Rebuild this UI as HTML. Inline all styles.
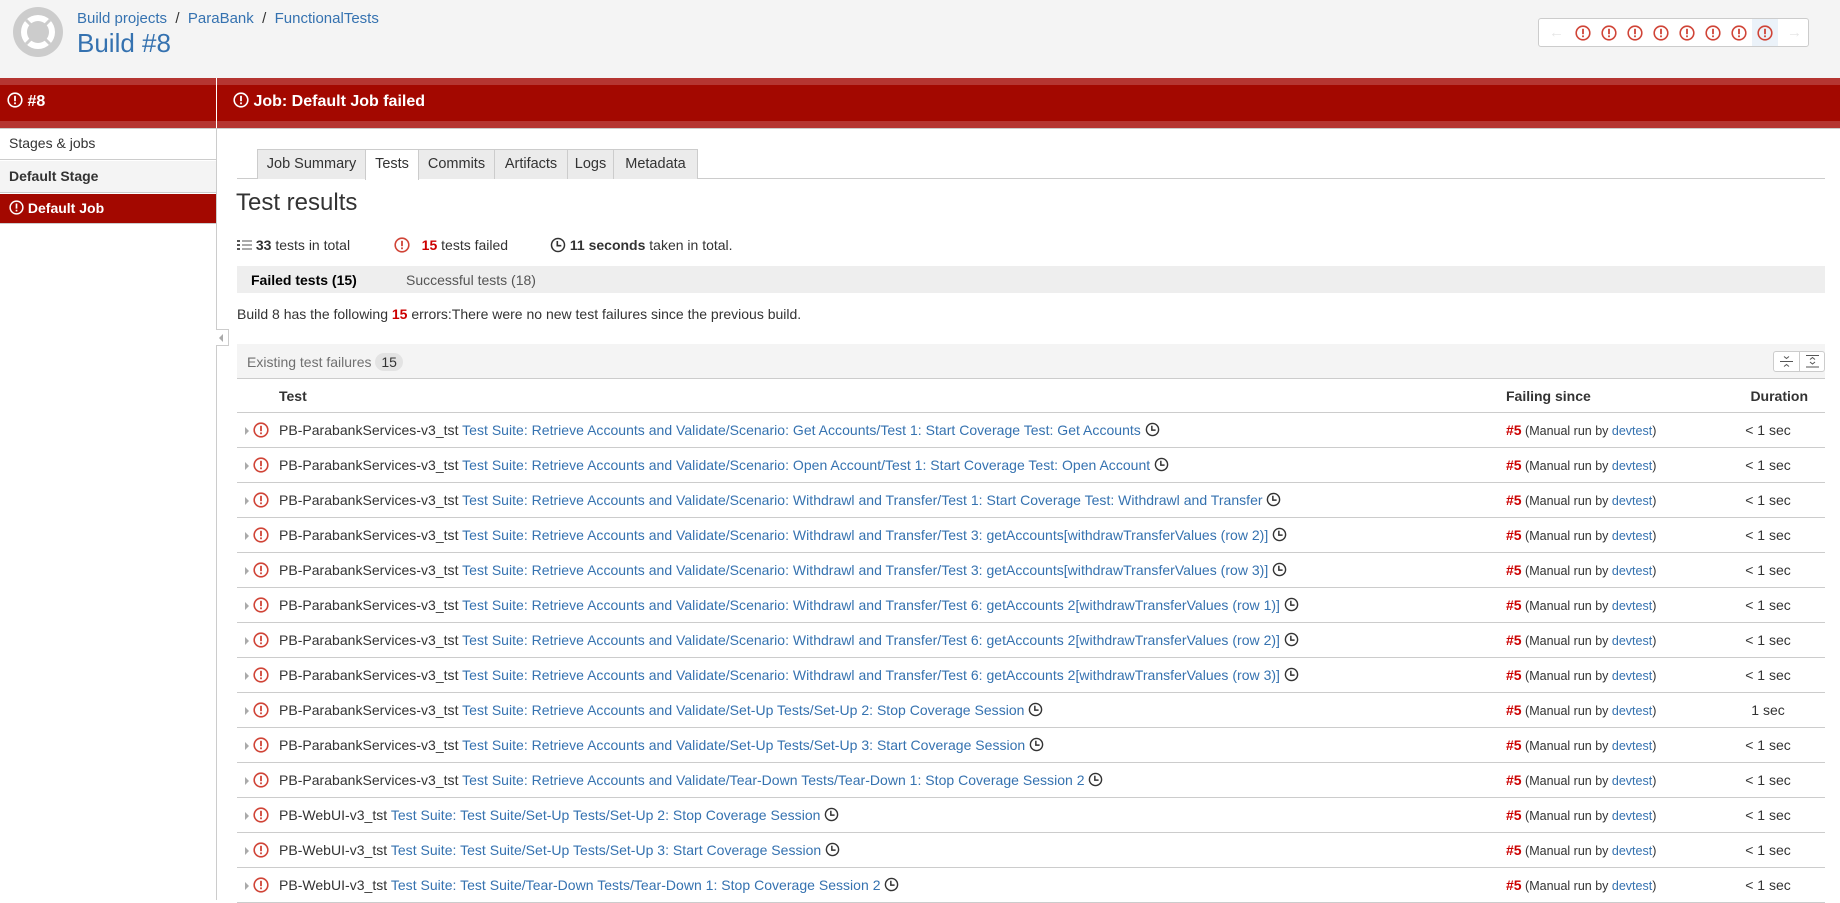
<!DOCTYPE html>
<html><head><meta charset="utf-8"><style>
*{box-sizing:border-box;margin:0;padding:0}
body{width:1840px;height:900px;overflow:hidden;background:#fff;font-family:"Liberation Sans",Arial,sans-serif;color:#333;font-size:14px;position:relative}
.a{position:absolute}
a,.lk{color:#3572b0;text-decoration:none}
.hdr{left:0;top:0;width:1840px;height:78px;background:#f4f4f4}
.band{left:0;top:78px;width:1840px;height:50px;background:#b53531}
.band .d{position:absolute;left:0;top:7px;width:1840px;height:36px;background:#a30800}
.ico{display:inline-block;vertical-align:middle}
.tab{position:absolute;top:149px;height:30px;border:1px solid #ccc;border-bottom:none;background:#ebebeb;font-size:14.5px;line-height:29px;text-align:center;color:#333}
.row{position:absolute;left:237px;width:1588px;height:35px;border-bottom:1px solid #ccc;font-size:14px;line-height:34px;white-space:nowrap}
.row .t{position:absolute;left:8px;top:14px;width:0;height:0;border-left:4px solid #aaa;border-top:4px solid transparent;border-bottom:4px solid transparent}
.row .e{position:absolute;left:16px;top:9px}
.row .n{position:absolute;left:42px;letter-spacing:0.02px}
.row .f{position:absolute;left:1269px;font-size:12.5px}
.row .f b{color:#c00;font-size:14px}
.row .du{position:absolute;right:17px;width:80px;text-align:center}
</style></head><body>
<svg width="0" height="0" style="position:absolute"><defs>
<symbol id="err" viewBox="0 0 16 16"><circle cx="8" cy="8" r="6.8" fill="none" stroke="currentColor" stroke-width="1.6"/><rect x="7.1" y="3.8" width="1.8" height="5.4" fill="currentColor"/><rect x="7.1" y="10.4" width="1.8" height="1.8" fill="currentColor"/></symbol>
<symbol id="clk" viewBox="0 0 16 16"><circle cx="8" cy="8" r="6.5" fill="none" stroke="currentColor" stroke-width="1.5"/><path d="M7.3 4v4.7h4" fill="none" stroke="currentColor" stroke-width="1.6"/></symbol>
</defs></svg>

<div class="a hdr"></div>
<svg class="a" style="left:13px;top:7px" width="50" height="50" viewBox="0 0 50 50"><circle cx="25" cy="25" r="25" fill="#ccc"/>
<g fill="#fff"><path d="M25 8a17 17 0 0 1 17 17h-6a11 11 0 0 0-11-11z"/><path d="M42 25a17 17 0 0 1-17 17v-6a11 11 0 0 0 11-11z"/><path d="M25 42A17 17 0 0 1 8 25h6a11 11 0 0 0 11 11z"/><path d="M8 25A17 17 0 0 1 25 8v6a11 11 0 0 0-11 11z"/></g>
<g stroke="#ccc" stroke-width="3"><line x1="13" y1="13" x2="20" y2="20"/><line x1="37" y1="13" x2="30" y2="20"/><line x1="13" y1="37" x2="20" y2="30"/><line x1="37" y1="37" x2="30" y2="30"/></g></svg>
<div class="a" style="left:77px;top:10px;font-size:15px"><a>Build projects</a>&nbsp; / &nbsp;<a>ParaBank</a>&nbsp; / &nbsp;<a>FunctionalTests</a></div>
<div class="a" style="left:77px;top:28px;font-size:26px;color:#3572b0">Build #8</div>

<div class="a" style="left:1538px;top:18px;width:271px;height:29px;background:#fff;border:1px solid #ccc;border-radius:3px"></div>
<div class="a" style="left:1752px;top:19px;width:26px;height:27px;background:#ebf2f9"></div>
<div class="a" style="left:1549px;top:24px;color:#e6e6e6;font-size:15px">&#8592;</div>
<div class="a" style="left:1787px;top:24px;color:#e6e6e6;font-size:15px">&#8594;</div>
<div class="a" style="left:1575px;top:25px;color:#d04437;white-space:nowrap">
<svg width="16" height="16" style="margin-right:10px"><use href="#err"/></svg><svg width="16" height="16" style="margin-right:10px"><use href="#err"/></svg><svg width="16" height="16" style="margin-right:10px"><use href="#err"/></svg><svg width="16" height="16" style="margin-right:10px"><use href="#err"/></svg><svg width="16" height="16" style="margin-right:10px"><use href="#err"/></svg><svg width="16" height="16" style="margin-right:10px"><use href="#err"/></svg><svg width="16" height="16" style="margin-right:10px"><use href="#err"/></svg><svg width="16" height="16"><use href="#err"/></svg></div>

<div class="a band"><div class="d"></div></div>
<div class="a" style="left:216px;top:78px;width:1px;height:50px;background:#fff"></div>
<div class="a" style="left:216px;top:128px;width:1px;height:772px;background:#ccc"></div>
<div class="a" style="left:0;top:128px;width:1840px;height:1px;background:#ccc"></div>
<div class="a" style="left:7px;top:93px;color:#fff;font-size:16px;font-weight:bold"><svg class="ico" width="16" height="16" style="margin-top:-3px"><use href="#err"/></svg> #8</div>
<div class="a" style="left:233px;top:93px;color:#fff;font-size:16px;font-weight:bold"><svg class="ico" width="16" height="16" style="margin-top:-3px"><use href="#err"/></svg> Job: Default Job failed</div>

<div class="a" style="left:0;top:129px;width:216px;height:31px;border-bottom:1px solid #ccc;padding:6px 9px;font-size:14px">Stages &amp; jobs</div>
<div class="a" style="left:0;top:161px;width:216px;height:32px;background:#f4f4f4;border-bottom:1px solid #ccc;padding:7px 9px;font-size:14px;font-weight:bold">Default Stage</div>
<div class="a" style="left:0;top:194px;width:216px;height:30px;background:#a30800;border-bottom:1px solid #ccc;padding:6px 9px;font-size:14px;font-weight:bold;color:#fff"><svg class="ico" width="15" height="15" style="margin-top:-3px"><use href="#err"/></svg> Default Job</div>

<div class="a" style="left:216px;top:329px;width:13px;height:17px;border:1px solid #ccc;border-left:none;background:#fff"><div style="position:absolute;left:3px;top:4px;border-right:4px solid #aaa;border-top:4px solid transparent;border-bottom:4px solid transparent"></div></div>

<div class="a" style="left:237px;top:178px;width:1588px;height:1px;background:#ccc"></div>
<div class="tab" style="left:257px;width:109px">Job Summary</div>
<div class="tab" style="left:365px;width:54px;background:#fff;height:31px">Tests</div>
<div class="tab" style="left:418px;width:77px">Commits</div>
<div class="tab" style="left:494px;width:74px">Artifacts</div>
<div class="tab" style="left:567px;width:47px">Logs</div>
<div class="tab" style="left:613px;width:85px">Metadata</div>

<div class="a" style="left:236px;top:189px;font-size:24px;color:#333">Test results</div>

<div class="a" style="left:237px;top:237px;font-size:14px;white-space:nowrap">
<svg class="ico" width="15" height="14" viewBox="0 0 15 14" style="margin-top:-3px"><g fill="#555"><rect x="0" y="2" width="3" height="2"/><rect x="0" y="6" width="3" height="2"/><rect x="0" y="10" width="3" height="2"/><rect x="5" y="2.5" width="10" height="1"/><rect x="5" y="6.5" width="10" height="1"/><rect x="5" y="10.5" width="10" height="1"/></g></svg> <b>33</b> tests in total</div>
<div class="a" style="left:394px;top:237px;font-size:14px;white-space:nowrap"><svg class="ico" width="16" height="16" style="color:#d04437;margin-top:-3px"><use href="#err"/></svg>&nbsp;&nbsp; <b style="color:#c00">15</b> tests failed</div>
<div class="a" style="left:550px;top:237px;font-size:14px;white-space:nowrap"><svg class="ico" width="16" height="16" style="color:#333;margin-top:-3px"><use href="#clk"/></svg> <b>11 seconds</b> taken in total.</div>

<div class="a" style="left:237px;top:266px;width:1588px;height:27px;background:#eee"></div>
<div class="a" style="left:251px;top:272px;font-size:14px;font-weight:bold;color:#000">Failed tests (15)</div>
<div class="a" style="left:406px;top:272px;font-size:14px;color:#555">Successful tests (18)</div>

<div class="a" style="left:237px;top:306px;font-size:14px">Build 8 has the following <b style="color:#c00">15</b> errors:There were no new test failures since the previous build.</div>

<div class="a" style="left:237px;top:344px;width:1588px;height:35px;background:#f4f4f4;border-bottom:1px solid #ccc"></div>
<div class="a" style="left:247px;top:353px;font-size:14px;color:#707070">Existing test failures <span style="display:inline-block;background:#e3e3e3;color:#333;border-radius:9px;padding:1px 6px;font-size:14px">15</span></div>
<div class="a" style="left:1773px;top:351px;width:52px;height:21px;border:1px solid #ccc;border-radius:3px;background:#fff">
<div style="position:absolute;left:25px;top:0;width:1px;height:19px;background:#ccc"></div>
<svg style="position:absolute;left:5px;top:3px" width="15" height="13" viewBox="0 0 15 13"><path d="M5 1.5l2.5 2 2.5-2M1 6.5h13M5 11.5l2.5-2 2.5 2" fill="none" stroke="#555" stroke-width="1"/></svg>
<svg style="position:absolute;left:31px;top:3px" width="15" height="13" viewBox="0 0 15 13"><path d="M1 0.5h13M5 4.5l2.5-2 2.5 2M5 7l2.5 2 2.5-2M1 12h13" fill="none" stroke="#555" stroke-width="1"/></svg></div>

<div class="a" style="left:279px;top:388px;font-weight:bold">Test</div>
<div class="a" style="left:1506px;top:388px;font-weight:bold">Failing since</div>
<div class="a" style="left:1700px;top:388px;width:108px;text-align:right;font-weight:bold">Duration</div>
<div class="a" style="left:237px;top:412px;width:1588px;height:1px;background:#ccc"></div>

<div class="row" style="top:413px"><i class="t"></i><svg class="e" width="16" height="16" style="color:#d04437"><use href="#err"/></svg><span class="n">PB-ParabankServices-v3_tst <span class="lk">Test Suite: Retrieve Accounts and Validate/Scenario: Get Accounts/Test 1: Start Coverage Test: Get Accounts</span> <svg class="ico" width="15" height="15" style="margin-top:-3px"><use href="#clk"/></svg></span><span class="f"><b>#5</b> (Manual run by <span class="lk">devtest</span>)</span><span class="du">&lt; 1 sec</span></div>
<div class="row" style="top:448px"><i class="t"></i><svg class="e" width="16" height="16" style="color:#d04437"><use href="#err"/></svg><span class="n">PB-ParabankServices-v3_tst <span class="lk">Test Suite: Retrieve Accounts and Validate/Scenario: Open Account/Test 1: Start Coverage Test: Open Account</span> <svg class="ico" width="15" height="15" style="margin-top:-3px"><use href="#clk"/></svg></span><span class="f"><b>#5</b> (Manual run by <span class="lk">devtest</span>)</span><span class="du">&lt; 1 sec</span></div>
<div class="row" style="top:483px"><i class="t"></i><svg class="e" width="16" height="16" style="color:#d04437"><use href="#err"/></svg><span class="n">PB-ParabankServices-v3_tst <span class="lk">Test Suite: Retrieve Accounts and Validate/Scenario: Withdrawl and Transfer/Test 1: Start Coverage Test: Withdrawl and Transfer</span> <svg class="ico" width="15" height="15" style="margin-top:-3px"><use href="#clk"/></svg></span><span class="f"><b>#5</b> (Manual run by <span class="lk">devtest</span>)</span><span class="du">&lt; 1 sec</span></div>
<div class="row" style="top:518px"><i class="t"></i><svg class="e" width="16" height="16" style="color:#d04437"><use href="#err"/></svg><span class="n">PB-ParabankServices-v3_tst <span class="lk">Test Suite: Retrieve Accounts and Validate/Scenario: Withdrawl and Transfer/Test 3: getAccounts[withdrawTransferValues (row 2)]</span> <svg class="ico" width="15" height="15" style="margin-top:-3px"><use href="#clk"/></svg></span><span class="f"><b>#5</b> (Manual run by <span class="lk">devtest</span>)</span><span class="du">&lt; 1 sec</span></div>
<div class="row" style="top:553px"><i class="t"></i><svg class="e" width="16" height="16" style="color:#d04437"><use href="#err"/></svg><span class="n">PB-ParabankServices-v3_tst <span class="lk">Test Suite: Retrieve Accounts and Validate/Scenario: Withdrawl and Transfer/Test 3: getAccounts[withdrawTransferValues (row 3)]</span> <svg class="ico" width="15" height="15" style="margin-top:-3px"><use href="#clk"/></svg></span><span class="f"><b>#5</b> (Manual run by <span class="lk">devtest</span>)</span><span class="du">&lt; 1 sec</span></div>
<div class="row" style="top:588px"><i class="t"></i><svg class="e" width="16" height="16" style="color:#d04437"><use href="#err"/></svg><span class="n">PB-ParabankServices-v3_tst <span class="lk">Test Suite: Retrieve Accounts and Validate/Scenario: Withdrawl and Transfer/Test 6: getAccounts 2[withdrawTransferValues (row 1)]</span> <svg class="ico" width="15" height="15" style="margin-top:-3px"><use href="#clk"/></svg></span><span class="f"><b>#5</b> (Manual run by <span class="lk">devtest</span>)</span><span class="du">&lt; 1 sec</span></div>
<div class="row" style="top:623px"><i class="t"></i><svg class="e" width="16" height="16" style="color:#d04437"><use href="#err"/></svg><span class="n">PB-ParabankServices-v3_tst <span class="lk">Test Suite: Retrieve Accounts and Validate/Scenario: Withdrawl and Transfer/Test 6: getAccounts 2[withdrawTransferValues (row 2)]</span> <svg class="ico" width="15" height="15" style="margin-top:-3px"><use href="#clk"/></svg></span><span class="f"><b>#5</b> (Manual run by <span class="lk">devtest</span>)</span><span class="du">&lt; 1 sec</span></div>
<div class="row" style="top:658px"><i class="t"></i><svg class="e" width="16" height="16" style="color:#d04437"><use href="#err"/></svg><span class="n">PB-ParabankServices-v3_tst <span class="lk">Test Suite: Retrieve Accounts and Validate/Scenario: Withdrawl and Transfer/Test 6: getAccounts 2[withdrawTransferValues (row 3)]</span> <svg class="ico" width="15" height="15" style="margin-top:-3px"><use href="#clk"/></svg></span><span class="f"><b>#5</b> (Manual run by <span class="lk">devtest</span>)</span><span class="du">&lt; 1 sec</span></div>
<div class="row" style="top:693px"><i class="t"></i><svg class="e" width="16" height="16" style="color:#d04437"><use href="#err"/></svg><span class="n">PB-ParabankServices-v3_tst <span class="lk">Test Suite: Retrieve Accounts and Validate/Set-Up Tests/Set-Up 2: Stop Coverage Session</span> <svg class="ico" width="15" height="15" style="margin-top:-3px"><use href="#clk"/></svg></span><span class="f"><b>#5</b> (Manual run by <span class="lk">devtest</span>)</span><span class="du">1 sec</span></div>
<div class="row" style="top:728px"><i class="t"></i><svg class="e" width="16" height="16" style="color:#d04437"><use href="#err"/></svg><span class="n">PB-ParabankServices-v3_tst <span class="lk">Test Suite: Retrieve Accounts and Validate/Set-Up Tests/Set-Up 3: Start Coverage Session</span> <svg class="ico" width="15" height="15" style="margin-top:-3px"><use href="#clk"/></svg></span><span class="f"><b>#5</b> (Manual run by <span class="lk">devtest</span>)</span><span class="du">&lt; 1 sec</span></div>
<div class="row" style="top:763px"><i class="t"></i><svg class="e" width="16" height="16" style="color:#d04437"><use href="#err"/></svg><span class="n">PB-ParabankServices-v3_tst <span class="lk">Test Suite: Retrieve Accounts and Validate/Tear-Down Tests/Tear-Down 1: Stop Coverage Session 2</span> <svg class="ico" width="15" height="15" style="margin-top:-3px"><use href="#clk"/></svg></span><span class="f"><b>#5</b> (Manual run by <span class="lk">devtest</span>)</span><span class="du">&lt; 1 sec</span></div>
<div class="row" style="top:798px"><i class="t"></i><svg class="e" width="16" height="16" style="color:#d04437"><use href="#err"/></svg><span class="n">PB-WebUI-v3_tst <span class="lk">Test Suite: Test Suite/Set-Up Tests/Set-Up 2: Stop Coverage Session</span> <svg class="ico" width="15" height="15" style="margin-top:-3px"><use href="#clk"/></svg></span><span class="f"><b>#5</b> (Manual run by <span class="lk">devtest</span>)</span><span class="du">&lt; 1 sec</span></div>
<div class="row" style="top:833px"><i class="t"></i><svg class="e" width="16" height="16" style="color:#d04437"><use href="#err"/></svg><span class="n">PB-WebUI-v3_tst <span class="lk">Test Suite: Test Suite/Set-Up Tests/Set-Up 3: Start Coverage Session</span> <svg class="ico" width="15" height="15" style="margin-top:-3px"><use href="#clk"/></svg></span><span class="f"><b>#5</b> (Manual run by <span class="lk">devtest</span>)</span><span class="du">&lt; 1 sec</span></div>
<div class="row" style="top:868px"><i class="t"></i><svg class="e" width="16" height="16" style="color:#d04437"><use href="#err"/></svg><span class="n">PB-WebUI-v3_tst <span class="lk">Test Suite: Test Suite/Tear-Down Tests/Tear-Down 1: Stop Coverage Session 2</span> <svg class="ico" width="15" height="15" style="margin-top:-3px"><use href="#clk"/></svg></span><span class="f"><b>#5</b> (Manual run by <span class="lk">devtest</span>)</span><span class="du">&lt; 1 sec</span></div>
</body></html>
